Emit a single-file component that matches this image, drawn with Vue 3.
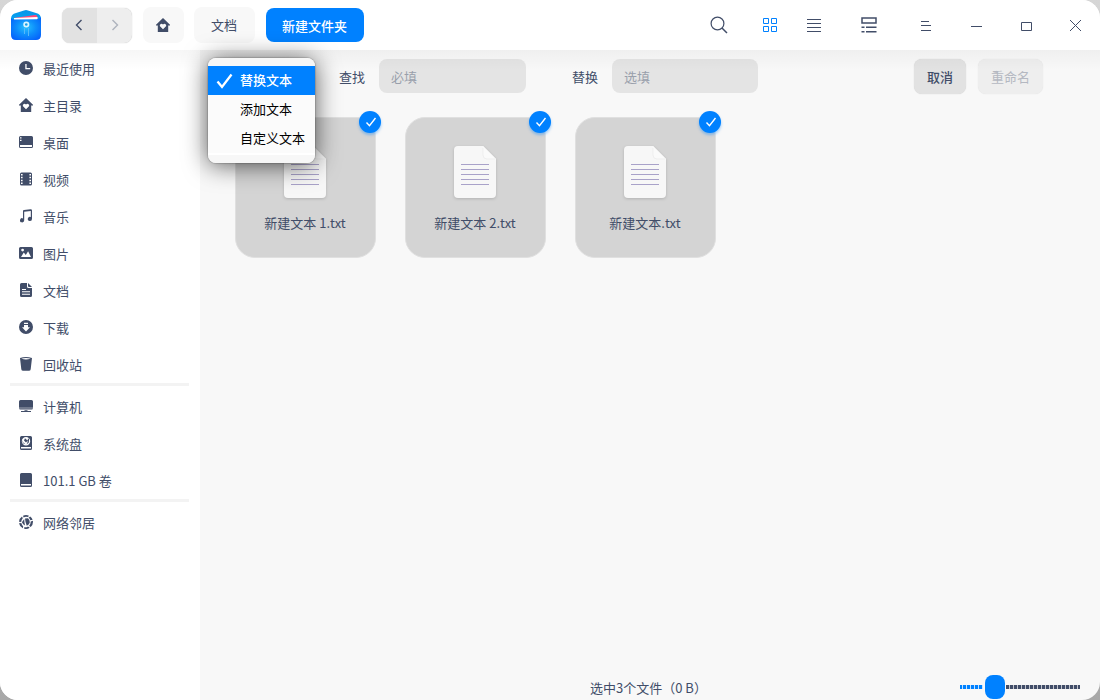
<script setup>
const groups = [
  [
    { t: '最近使用', i: 'clock' }, { t: '主目录', i: 'home' }, { t: '桌面', i: 'desktop' },
    { t: '视频', i: 'video' }, { t: '音乐', i: 'music' }, { t: '图片', i: 'picture' },
    { t: '文档', i: 'doc' }, { t: '下载', i: 'download' }, { t: '回收站', i: 'trash' }
  ],
  [{ t: '计算机', i: 'computer' }, { t: '系统盘', i: 'system' }, { t: '101.1 GB 卷', i: 'disk' }],
  [{ t: '网络邻居', i: 'network' }]
]
const homePath = 'M7 0L14 6.7V7.5H12.2V14H1.8V7.5H0V6.7ZM7 11.2L10 8.3Q10.6 7 9.6 6.2Q8.2 5.2 7 6.6Q5.8 5.2 4.4 6.2Q3.4 7 4 8.3Z'
const icons = {
  clock: 'M7 0A7 7 0 1 0 7 14A7 7 0 1 0 7 0ZM6.3 3H7.6V7H11.2V8.2H6.3Z',
  home: homePath,
  desktop: 'M1.500 1H12.500Q14 1 14 2.500V11.500Q14 13 12.500 13H1.500Q0 13 0 11.500V2.500Q0 1 1.500 1ZM1 2.200V3.500H2.500V2.200ZM1 4.800V6.100H2.500V4.800ZM1 10.100V11.400Q1 12 1.600 12H12.400Q13 12 13 11.400V10.100Z',
  video: 'M2.5 .5H11.5Q13 .5 13 2V12Q13 13.5 11.5 13.5H2.5Q1 13.5 1 12V2Q1 .5 2.5 .5ZM2 2V3.5H3.6V2ZM2 4.8V6.3H3.6V4.8ZM2 7.7V9.2H3.6V7.7ZM2 10.5V12H3.6V10.5ZM10.4 2V3.5H12V2ZM10.4 4.8V6.3H12V4.8ZM10.4 7.7V9.2H12V7.7ZM10.4 10.5V12H12V10.5Z',
  music: 'M4 2Q4 1.2 5 1L11.5 0.3Q13 0.2 13 1.5V9.8A2.1 2.1 0 1 1 11.8 8V2L5.2 2.8V11.3A2.1 2.1 0 1 1 4 9.4Z',
  picture: 'M1.5 1H12.5Q14 1 14 2.5V11.5Q14 13 12.5 13H1.5Q0 13 0 11.5V2.5Q0 1 1.5 1ZM3.6 2.7A1.4 1.4 0 1 0 3.6 5.5A1.4 1.4 0 1 0 3.6 2.7ZM2 11H12L9.1 5.2L6.8 9L4.8 6.6Z',
  doc: 'M2.5 0H8V3.5Q8 5 9.5 5H13V12.5Q13 14 11.5 14H2.5Q1 14 1 12.5V1.5Q1 0 2.5 0ZM9 0L13 4H10Q9 4 9 3ZM3 6V7H7V6ZM3 8.3V9.3H11V8.3ZM3 10.8V11.8H11V10.8Z',
  download: 'M7 0A7 7 0 1 0 7 14A7 7 0 1 0 7 0ZM5 2.8H9V4H5ZM5 5H9V7.3H11L7 11.5L3 7.3H5Z',
  trash: 'M1 1Q7 -.9 13 1L11.7 12.2Q11.5 13.8 9.8 13.8H4.2Q2.5 13.8 2.3 12.2ZM2.3 1.5Q7 3.5 11.7 1.5Q7 .3 2.3 1.5Z',
  computer: 'M1.5 1H12.5Q14 1 14 2.5V8.7H0V2.5Q0 1 1.5 1ZM0 9.2H14Q14 10.6 12.6 10.6H1.4Q0 10.6 0 9.2ZM5.5 11.2H8.5V12H12V13H2V12H5.5Z',
  system: 'M2.5 0H11.5Q13 0 13 1.5V12.5Q13 14 11.5 14H2.5Q1 14 1 12.5V1.5Q1 0 2.5 0ZM2 11V12.4H12V11ZM7 1A4.2 4.2 0 1 0 7 9.4A4.2 4.2 0 1 0 7 1ZM6 2.3L5 4.5L7 6.5L8.8 4.5L7.3 3.4ZM9 2.3L10.1 3.2L9.8 6.5L7.5 8.5L8.5 6.2ZM3.5 4L4 6.2L6.5 8.3Q3 7.7 3.5 4Z',
  disk: 'M2.5 0H11.5Q13 0 13 1.5V12.5Q13 14 11.5 14H2.5Q1 14 1 12.5V1.5Q1 0 2.5 0ZM2 11V12.4H12V11Z',
  network: 'M4 .7Q7 -.7 10 .7L9 2Q6.500 1.200 4.600 2.400ZM3 1.600L3.800 3.300Q2.300 5 2.200 7L0 6.800Q.2 3.500 3 1.600ZM0 8.200L2.300 8Q2.700 10 4.200 11.400L3.800 13.200Q.7 11.800 0 8.200ZM5.200 12.200Q7.200 12.700 9 11.500L10.700 12.800Q8 14.600 5.200 13.700ZM10.100 10.800Q11.800 8.800 11.700 6.400L13.900 5.800Q14.400 9.700 11.700 12ZM11.200 1.500Q13 2.800 13.600 4.700L11.400 5.200Q10.900 3.700 9.600 2.800ZM2.900 7.200L5.200 4Q5.300 7.300 6 10.500Q4 9.500 2.900 7.200ZM6 3.500L9 3.200Q11 5 10.700 7.700Q10 9.800 7.800 10.800Q6.200 7.500 6 3.500Z'
}
const files = ['新建文本 1.txt', '新建文本 2.txt', '新建文本.txt']
const options = ['替换文本', '添加文本', '自定义文本']
</script>

<template>
  <div class="window">
    <header class="bar">
      <svg class="logo" width="32" height="32" viewBox="0 0 32 32">
        <defs>
          <linearGradient id="top" x2="0" y2="1"><stop stop-color="#0793e8" /><stop offset="1" stop-color="#02b4fb" /></linearGradient>
          <radialGradient id="front" cx=".5" cy=".45" r=".65"><stop stop-color="#25c0ff" /><stop offset=".5" stop-color="#0d8dfb" /><stop offset="1" stop-color="#0561fb" /></radialGradient>
        </defs>
        <path d="M1 10Q1 5 6 4L14 1.500Q16 .5 18 1.500L26 4Q31 5 31 10V20H1Z" fill="url(#top)" />
        <path d="M4 9L25 6Q27 5.800 27.500 8V10H4Z" fill="#ff4778" />
        <path d="M4 9Q16 8.500 27.500 8V12H4Z" fill="#fff" />
        <path d="M1 9Q2 10.500 5 10.500L27 10.300Q30 10 31 8V26Q31 31 26 31H6Q1 31 1 26Z" fill="url(#front)" />
        <path d="M14.500 19V25M18.500 19V27" stroke="#54b9fb" stroke-width="1" />
        <circle cx="16.300" cy="15.500" r="2.200" fill="#169fe9" stroke="#d9f5ff" stroke-width="1.700" />
      </svg>
      <div class="nav">
        <span class="back"><svg width="8" height="12" viewBox="0 0 8 12"><path d="M6.500 1L1.500 6L6.500 11" /></svg></span>
        <span class="next"><svg width="8" height="12" viewBox="0 0 8 12"><path d="M1.500 1L6.500 6L1.500 11" /></svg></span>
      </div>
      <div class="crumb house"><svg width="14" height="14" viewBox="0 0 14 14"><path :d="homePath" fill="#414d68" fill-rule="evenodd" /></svg></div>
      <div class="crumb docs">文档</div>
      <div class="newdir">新建文件夹</div>
      <div class="tools">
        <svg class="search" width="18" height="18" viewBox="0 0 18 18"><circle cx="7.500" cy="7.500" r="6.400" /><path d="M12 12L17 17" stroke-width="1.500" /></svg>
        <svg class="grid" width="14" height="14" viewBox="0 0 14 14"><path d="M.5 .5h5v5h-5zM8.500 .5h5v5h-5zM.5 8.500h5v5h-5zM8.500 8.500h5v5h-5z" /></svg>
        <svg class="list" width="14" height="14" viewBox="0 0 14 14"><path d="M0 1.500H14M0 5.500H14M0 9.500H14M0 13.500H14" /></svg>
        <svg class="detail" width="16" height="16" viewBox="0 0 16 16"><path d="M1 1H15V6H1Z" stroke-width="1.500" /><path d="M.5 10.300H3.500M5 10.300H15.500M.5 14.800H3.500M5 14.800H15.500" stroke-width="1.500" /></svg>
        <svg class="menu" width="10" height="11" viewBox="0 0 10 11"><path d="M0 .5H8M0 4.500H10M0 9.500H10" /></svg>
        <svg class="min" width="11" height="11" viewBox="0 0 11 11"><path d="M0 5.500H11" /></svg>
        <svg class="max" width="11" height="9" viewBox="0 0 11 9"><path d="M.5 .5H10.500V8.500H.5Z" /></svg>
        <svg class="close" width="11" height="11" viewBox="0 0 11 11"><path d="M0 0L11 11M11 0L0 11" /></svg>
      </div>
    </header>

    <div class="body">
      <aside>
        <ul v-for="(g, n) in groups" :key="n">
          <li v-for="item in g" :key="item.t">
            <svg width="14" height="14" viewBox="0 0 14 14"><path :d="icons[item.i]" fill="#414d68" fill-rule="evenodd" /></svg>
            <span>{{ item.t }}</span>
          </li>
        </ul>
      </aside>

      <main>
        <div class="rename">
          <label class="find">查找</label>
          <div class="field f1">必填</div>
          <label class="swap">替换</label>
          <div class="field f2">选填</div>
          <div class="btn">取消</div>
          <div class="btn off">重命名</div>
        </div>
        <div class="files">
          <div v-for="f in files" :key="f" class="card">
            <svg class="sheet" width="48" height="58" viewBox="0 0 48 58">
              <path d="M7 2H32L45 15V50Q45 54 41 54H7Q3 54 3 50V6Q3 2 7 2Z" fill="#f7f7f7" />
              <path d="M32 2V11Q32 15 36 15H45Z" fill="#fafafa" />
              <path d="M32 4V11Q32 15 36 15H44" fill="none" stroke="#e9e9e9" stroke-width=".7" />
              <path d="M10 20.500H38M10 25.500H38M10 30.500H38M10 35.500H38M10 40.500H38" stroke="#a9a2c9" />
            </svg>
            <p>{{ f }}</p>
            <span class="badge"><svg width="12" height="10" viewBox="0 0 12 10"><path d="M1.500 5.500L4.500 8.700L10.500 1" /></svg></span>
          </div>
        </div>
        <footer>
          <span class="status">选中3个文件（0 B）</span>
          <div class="slider">
            <i class="dots on"></i><i class="knob"></i><i class="dots"></i>
          </div>
        </footer>
      </main>
    </div>

    <div class="popup">
      <div v-for="(o, n) in options" :key="o" class="opt" :class="{ sel: n === 0 }">
        <svg width="17" height="16" viewBox="0 0 17 16"><path v-if="n === 0" d="M1.500 8.500L6 14L15.500 1.500" /></svg>
        <span>{{ o }}</span>
      </div>
    </div>
  </div>
</template>

<style>
body { background: linear-gradient(#d6d6d6, #a8a8a8); }
</style>

<style scoped>
.window { position: relative; width: 1100px; height: 700px; overflow: hidden; border-radius: 18px; background: #f8f8f8; color: #414d68; font: 13px/20px "Noto Sans CJK SC", sans-serif; white-space: nowrap; }
svg { display: block; flex: none; }
.bar { height: 50px; background: #fff; display: flex; align-items: center; }
.logo { margin-left: 10px; }
.nav { display: flex; margin-left: 20px; width: 70px; height: 35px; margin-top: 1px; border-radius: 8px; overflow: hidden; background: #eee; box-shadow: 0 0 1px #bbb; }
.nav span { width: 35px; display: flex; align-items: center; justify-content: center; }
.nav svg { fill: none; stroke: #414d68; stroke-width: 1.4; margin-top: -1px; }
.back { background: #e2e2e2; }
.nav .back svg { margin-right: 2px; }
.nav .next svg { stroke: #aeb3bd; margin-left: 1px; }
.crumb { height: 36px; border-radius: 8px; background: #f8f8f8; display: flex; align-items: center; justify-content: center; }
.house { width: 41px; margin-left: 11px; }
.house svg { margin-right: 1px; }
.docs { box-sizing: border-box; width: 61px; margin-left: 10px; padding: 0 1px 0 0; }
.newdir { margin-left: 11px; width: 98px; height: 34px; border-radius: 8px; background: #0081ff; color: #fff; font-weight: 500; text-align: center; line-height: 35px; text-indent: -1px; }
.tools { display: flex; align-items: center; margin-left: auto; }
.tools svg { fill: none; stroke: #414d68; stroke-width: 1; }
.tools .search { stroke-width: 1.2; }
.tools .grid { margin-left: 35px; stroke: #0081ff; }
.list { margin-left: 30px; }
.detail { margin-left: 40px; }
.menu { margin: 3px 0 0 44px; }
.min { margin: 3px 0 0 40px; }
.max { margin: 3px 0 0 39px; }
.close { margin: 1px 19px 0 38px; }
.body { position: relative; display: flex; height: 650px; }
.body::before { content: ""; position: absolute; z-index: 1; left: 0; right: 0; top: 0; height: 20px; background: linear-gradient(rgba(0, 0, 0, .035), transparent); }
aside { width: 200px; background: #fff; padding-top: 1px; box-sizing: border-box; }
ul { list-style: none; margin: 0 11px 0 10px; padding: 0; }
ul + ul { margin-top: -1px; border-top: 3px solid #f3f3f3; padding-top: 3px; }
li { height: 37px; display: flex; align-items: center; padding-left: 9px; }
li svg { margin: -3px 10px 0 0; }
li span { margin-top: -2px; }
main { flex: 1; display: flex; flex-direction: column; }
.rename { display: flex; align-items: center; height: 35px; margin-top: 9px; padding-left: 139px; }
.rename label { width: 26px; }
.find, .swap { padding-top: 1px; }
.field { height: 34px; line-height: 36px; box-sizing: border-box; border-radius: 8px; background: #e4e4e4; color: #999fab; padding-left: 12px; margin: -1px 0 0 14px; }
.f1 { width: 147px; }
.f2 { width: 146px; }
.swap { margin-left: 46px; }
.btn { margin-left: 156px; width: 52px; height: 35px; line-height: 35px; border-radius: 8px; background: #e2e2e2; text-align: center; font-weight: 500; box-shadow: 0 0 1px #ccc; }
.btn.off { margin-left: 12px; width: 65px; background: #eee; color: #b4b8c1; box-shadow: 0 0 1px #ddd; font-weight: 400; }
.files { display: flex; gap: 29px; padding: 23px 0 0 35px; }
.card { position: relative; width: 141px; height: 141px; box-sizing: border-box; border: 1px solid #e0e0e0; border-radius: 20px; background: #d4d4d4; display: flex; flex-direction: column; align-items: center; }
.sheet { margin: 26px 0 0 -1px; filter: drop-shadow(0 1px 1.5px rgba(0, 0, 0, .16)); }
.card p { margin: 11px 1px 0 0; }
.badge { position: absolute; right: -6px; top: -7px; width: 22px; height: 22px; border-radius: 50%; background: #0081ff; box-shadow: 0 2px 3px rgba(0, 129, 255, .4); display: flex; align-items: center; justify-content: center; }
.badge svg { fill: none; stroke: #fff; stroke-width: 1.4; margin-left: 1px; }
footer { margin-top: auto; height: 25px; display: flex; align-items: center; }
.status { margin-left: 390px; }
.slider { margin: -1px 20px 0 auto; display: flex; align-items: center; width: 120px; height: 24px; }
.dots { flex: 1; height: 4px; margin: 0 0 0 1px; background: repeating-linear-gradient(90deg, #414d68 0 3px, #c3c6ce 3px 4px); }
.dots.on { flex: none; width: 23px; margin: 0 2px 0 0; background: repeating-linear-gradient(90deg, #0081ff 0 2px, #c5e2ff 2px 3px, #0081ff 3px 4px); }
.knob { width: 20px; height: 24px; border-radius: 8px; background: #0081ff; }
.popup { position: absolute; z-index: 2; left: 208px; top: 58px; width: 107px; height: 105px; box-sizing: border-box; padding-top: 8px; border-radius: 8px; background: linear-gradient(#f7f7f7 0 8px, #fbfbfb 8px 95px, #fff 95px 97px, #f7f7f7 97px); box-shadow: 0 0 1px 1px rgba(0, 0, 0, .15), 0 2px 24px rgba(0, 0, 0, .65); color: #000; }
.opt { height: 29px; display: flex; align-items: center; padding-left: 8px; }
.opt svg { margin-right: 7px; fill: none; stroke: #fff; stroke-width: 2.3; margin-top: 1px; }
.opt span { margin-top: -2px; }
.opt.sel { background: #0081ff; color: #fff; font-weight: 500; }
</style>
